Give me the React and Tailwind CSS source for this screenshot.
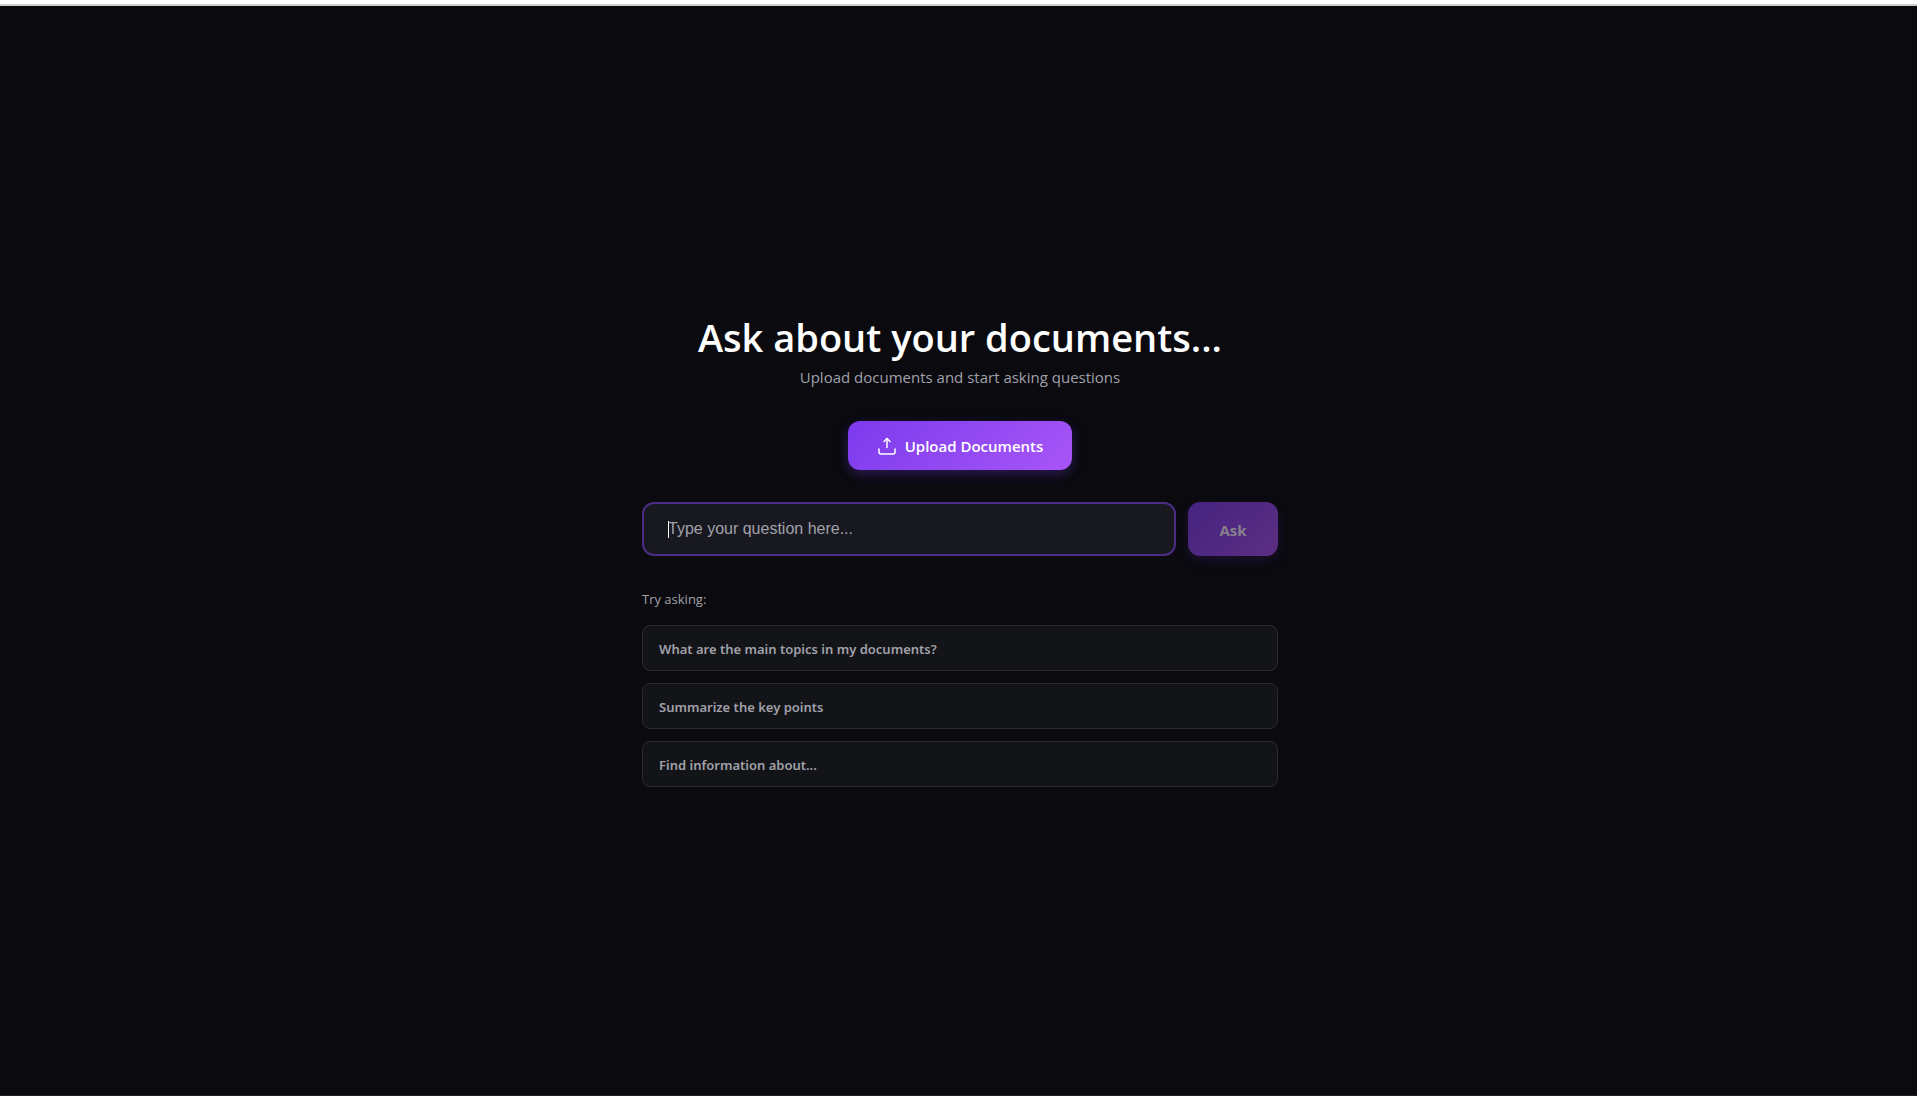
const suggestions = [
  'What are the main topics in my documents?',
  'Summarize the key points',
  'Find information about...',
];

function UploadIcon() {
  return (
    <svg width="20" height="20" viewBox="0 0 20 20" fill="none" stroke="currentColor" strokeWidth="1.5" strokeLinecap="round" strokeLinejoin="round" aria-hidden="true">
      <path d="M2 13v3a2 2 0 0 0 2 2h12a2 2 0 0 0 2-2v-3" />
      <path d="M10 11.5V2.5" />
      <path d="M7 5.5 10 2.5 13 5.5" />
    </svg>
  );
}

export default function App() {
  return (
    <div className="flex min-h-screen flex-col border-b border-[#222226] bg-[#0a0a0f] font-['Open_Sans','Noto_Sans',sans-serif]">
      <div className="h-1.5 border-b-2 border-[#cbd0cf] bg-white" />
      <main className="flex flex-1 items-center justify-center pb-0.5 pl-[3px]">
        <div className="flex w-full max-w-[636px] flex-col">
          <h1 className="mb-1 whitespace-nowrap text-center text-[38px] leading-12 font-semibold text-white">
            Ask about your documents...
          </h1>
          <p className="mb-8 text-center text-[15px] leading-6 text-[#a1a1aa]">
            Upload documents and start asking questions
          </p>
          <button
            type="button"
            className="mb-8 flex h-[49px] w-56 items-center justify-center gap-2 self-center whitespace-nowrap rounded-xl bg-linear-135 from-[#7c3aed] to-[#a855f7] pt-0.5 text-[15px] font-semibold text-white shadow-[0_4px_12px_rgba(124,58,237,0.3)]"
          >
            <UploadIcon />
            Upload Documents
          </button>
          <form className="mb-8 flex gap-3" onSubmit={(e) => e.preventDefault()}>
            <div className="relative flex-1">
              <input
                type="text"
                aria-label="Your question"
                placeholder="Type your question here..."
                className="h-[54px] w-full rounded-xl border-2 border-[#4c2d86] bg-[#181820] px-6 font-['Liberation_Sans',Arial,sans-serif] text-base text-white outline-none placeholder:text-[#a1a1aa]"
              />
              <span className="pointer-events-none absolute top-[19px] left-[26px] h-[17px] w-px bg-white" />
            </div>
            <button
              type="submit"
              disabled
              className="h-[54px] w-[90px] rounded-xl bg-linear-135 from-[#45237f] to-[#5c2e84] pt-1 text-[15px] font-bold text-[#88808f] shadow-[0_4px_12px_rgba(124,58,237,0.15)]"
            >
              Ask
            </button>
          </form>
          <p className="mb-3.5 text-[13px] leading-[23px] text-[#a1a1aa]">Try asking:</p>
          <div className="flex flex-col gap-3 font-['Noto_Sans',sans-serif]">
            {suggestions.map((text) => (
              <button
                key={text}
                type="button"
                className="h-[46px] rounded-lg border border-[#2a2a35] bg-[#131418] px-4 pt-1 text-left text-[13px] font-semibold text-[#a1a1aa]"
              >
                {text}
              </button>
            ))}
          </div>
        </div>
      </main>
    </div>
  );
}
